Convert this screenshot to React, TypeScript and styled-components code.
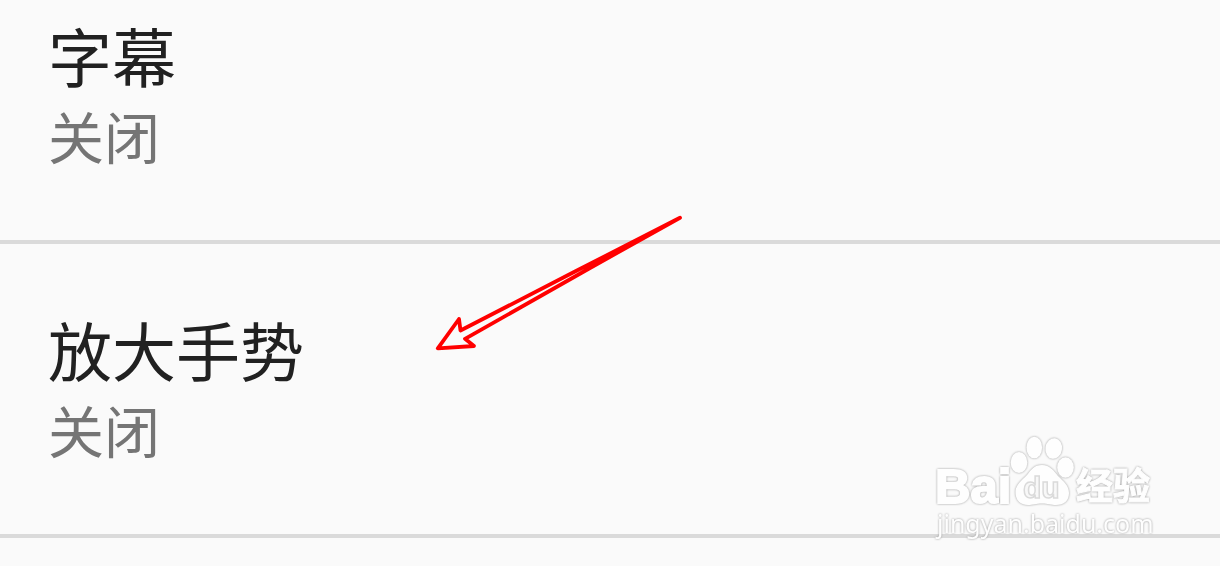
import React from "react";
import styled, { createGlobalStyle } from "styled-components";

const GlobalStyle = createGlobalStyle`
  body {
    margin: 0;
    background: #fafafa;
    font-family: "Noto Sans CJK SC", sans-serif;
  }
`;

const Screen = styled.main`
  position: relative;
  min-height: 100vh;
  overflow: hidden;
  background: #fafafa;
`;

const SettingsList = styled.ul`
  list-style: none;
  margin: 0;
  padding: 0;
`;

const SettingRow = styled.li<{ $clipped?: boolean }>`
  padding: ${(p) => (p.$clipped ? 12 : 62)}px 50px 66px 48px;
  border-bottom: 4px solid #dadada;
`;

const Title = styled.div`
  font-size: 64px;
  line-height: 84px;
  color: #212121;
`;

const Status = styled.div`
  font-size: 56px;
  line-height: 78px;
  color: #757575;
`;

const Arrow = styled.svg`
  position: absolute;
  top: 208px;
  left: 430px;
`;

const Watermark = styled.div`
  position: absolute;
  top: 432px;
  right: 60px;
  width: 228px;
  filter: drop-shadow(0 0 1px #9c9c9c);
`;

const Logo = styled.svg`
  display: block;
  overflow: visible;
  fill: #fefefe;
`;

const SiteName = styled.div`
  padding-left: 5px;
  font-family: "Noto Sans", sans-serif;
  font-size: 25px;
  line-height: 26px;
  color: #fefefe;
  white-space: nowrap;
`;

const settings = [
  { title: "字幕", status: "关闭", clipped: true },
  { title: "放大手势", status: "关闭" },
];

export default function App() {
  return (
    <>
      <GlobalStyle />
      <Screen>
        <SettingsList>
          {settings.map((s) => (
            <SettingRow key={s.title} $clipped={s.clipped}>
              <Title>{s.title}</Title>
              <Status>{s.status}</Status>
            </SettingRow>
          ))}
        </SettingsList>
        <Arrow width="260" height="150" viewBox="430 208 260 150" aria-hidden="true">
          <path
            d="M680 217.8 Q610 253.500 575 271.500 L460.500 330.500 L459 319 L437.800 348.300 L474 346 L465 338.800 L590 268 Z"
            fill="none"
            stroke="#ff0000"
            strokeWidth="3.8"
            strokeLinejoin="round"
            strokeLinecap="round"
          />
        </Arrow>
        <Watermark>
          <Logo width="228" height="78" viewBox="932 432 228 78">
            <text
              x="935"
              y="503"
              fontFamily="Liberation Sans, sans-serif"
              fontWeight="700"
              fontSize="49"
              stroke="#fefefe"
              strokeWidth="2"
            >
              Bai
            </text>
            <ellipse cx="1019" cy="462.500" rx="8.300" ry="10.500" />
            <ellipse cx="1034.300" cy="447.500" rx="7.800" ry="10.800" />
            <ellipse cx="1053.700" cy="448.500" rx="8.300" ry="10.300" transform="rotate(8 1053.7 448.5)" />
            <ellipse cx="1065.500" cy="467.500" rx="8.300" ry="10.300" />
            <path d="M1042 465 C1050 465 1054 471 1058 476 C1063 481 1069 485 1069 493 C1069 501 1064 505 1056 505 C1051 505 1048 503.500 1042 503.500 C1036 503.500 1033 505 1028 505 C1020 505 1015.500 500 1015.500 492 C1015.500 485 1022 480 1027 475 C1031 470 1034 465 1042 465 Z" />
            <text
              x="1023"
              y="498"
              fontFamily="Liberation Sans, sans-serif"
              fontWeight="700"
              fontSize="30"
              fill="#f8f8f8"
              stroke="#dadada"
              strokeWidth="1.5"
            >
              du
            </text>
            <text
              x="1076"
              y="500"
              fontFamily="Noto Sans CJK SC, sans-serif"
              fontWeight="700"
              fontSize="37"
              stroke="#fefefe"
              strokeWidth="1"
            >
              经验
            </text>
          </Logo>
          <SiteName>jingyan.baidu.com</SiteName>
        </Watermark>
      </Screen>
    </>
  );
}
